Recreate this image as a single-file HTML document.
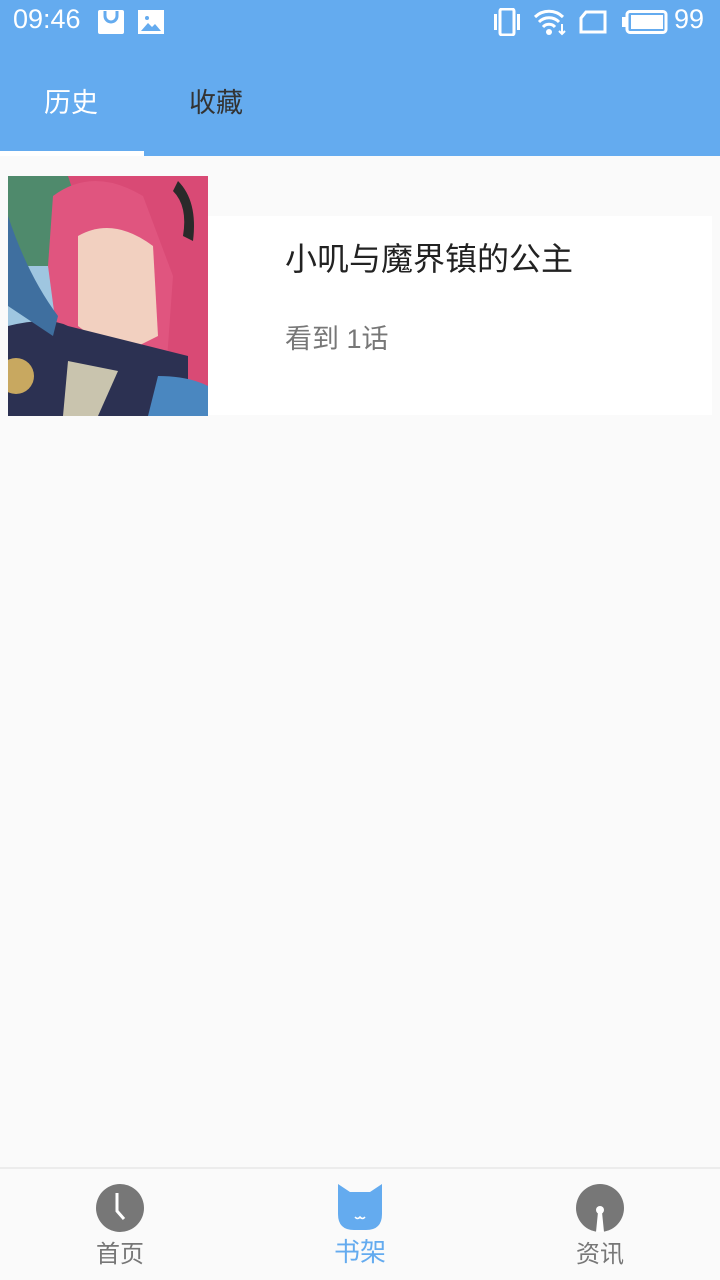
<!DOCTYPE html>
<html><head><meta charset="utf-8"><style>
*{margin:0;padding:0;box-sizing:border-box}
body{width:720px;height:1280px;background:#fafafa;font-family:"Liberation Sans","Noto Sans CJK SC",sans-serif;position:relative;overflow:hidden}
.top{position:absolute;left:0;top:0;width:720px;height:156px;background:#64abef}
.st{position:absolute;top:4px;color:#fff;font-size:27px}
.tab{position:absolute;top:81px;font-size:27px}
.ind{position:absolute;left:0;top:151px;width:144px;height:5px;background:#fff}
.card{position:absolute;left:208px;top:216px;width:504px;height:199px;background:#fff}
.t1{position:absolute;left:285px;top:234px;font-size:32px;color:#222}
.t2{position:absolute;left:285px;top:317px;font-size:27px;color:#777}
.bot{position:absolute;left:0;top:1167px;width:720px;height:113px;background:#fafafa;border-top:2px solid #ececec}
.lbl{position:absolute;top:1234px;font-size:24px;color:#777}
</style></head><body>
<div class="top">
<div class="st" style="left:13px">09:46</div>
<svg style="position:absolute;left:98px;top:10px" width="26" height="24"><rect width="26" height="24" rx="2" fill="#fff"/><path d="M7 1v5a6 6 0 0 0 12 0V1" stroke="#64abef" stroke-width="3" fill="none"/></svg>
<svg style="position:absolute;left:138px;top:10px" width="26" height="24"><rect width="26" height="24" fill="#fff"/><path d="M3 21l7-8 4 4 3-3 6 7z" fill="#64abef"/><circle cx="9" cy="8" r="2" fill="#64abef"/></svg>
<svg style="position:absolute;left:494px;top:8px" width="26" height="28"><rect x="6" y="1" width="14" height="26" rx="2" fill="none" stroke="#fff" stroke-width="3"/><rect x="0" y="6" width="3" height="16" fill="#fff"/><rect x="23" y="6" width="3" height="16" fill="#fff"/></svg>
<svg style="position:absolute;left:533px;top:8px" width="34" height="28"><path d="M2 9a20 20 0 0 1 28 0M6 14a14 14 0 0 1 20 0M10 19a8 8 0 0 1 12 0" stroke="#fff" stroke-width="3" fill="none"/><circle cx="16" cy="24" r="3" fill="#fff"/><path d="M29 16v10m-3-3l3 3 3-3" stroke="#fff" stroke-width="2" fill="none"/></svg>
<svg style="position:absolute;left:578px;top:10px" width="30" height="24"><path d="M8 2h19v20H3V8z" fill="none" stroke="#fff" stroke-width="3"/></svg>
<svg style="position:absolute;left:622px;top:10px" width="46" height="24"><rect x="5" y="1.5" width="39" height="21" rx="3" fill="none" stroke="#fff" stroke-width="3"/><rect x="9" y="5" width="32" height="14" fill="#fff"/><rect x="0" y="7" width="4" height="10" fill="#fff"/></svg>
<div class="st" style="left:674px">99</div>
<div class="tab" style="left:44px;color:#fff">历史</div>
<div class="tab" style="left:189px;color:#333">收藏</div>
<div class="ind"></div>
</div>
<div class="card"></div>
<svg style="position:absolute;left:8px;top:176px" width="200" height="240">
<rect width="200" height="240" fill="#3f6f5c"/>
<rect x="0" y="0" width="70" height="90" fill="#4f8a6c"/>
<rect x="0" y="90" width="60" height="150" fill="#9fc6e0"/>
<path d="M60 0h140v240H140z" fill="#d94a75"/>
<path d="M45 20q40-30 90 0l30 80-10 140H60l-20-150z" fill="#e0557f"/>
<path d="M70 60q35-20 75 10l5 90-40 20-40-30z" fill="#f2d0c0"/>
<path d="M0 150q40-10 60 0l80 20 40 10v60H0z" fill="#2c3152"/>
<path d="M0 40q20 60 50 100l-5 20L0 130z" fill="#3f6f9f"/>
<path d="M150 200q30 0 50 10v30h-60z" fill="#4a87c0"/>
<path d="M60 185l50 10-20 45H55z" fill="#c9c4ae"/>
<path d="M170 5q20 20 15 60l-10-5q5-30-10-45z" fill="#2a2a2a"/>
<circle cx="8" cy="200" r="18" fill="#c8a860"/>
</svg>
<div class="t1">小叽与魔界镇的公主</div>
<div class="t2">看到 1话</div>
<div class="bot"></div>
<svg style="position:absolute;left:96px;top:1184px" width="48" height="48"><ellipse cx="24" cy="24" rx="24" ry="24" fill="#777"/><path d="M21 9v18l7 8" stroke="#fff" stroke-width="3" fill="none"/></svg>
<svg style="position:absolute;left:336px;top:1184px" width="48" height="48"><path d="M2 0l12 8h20l12-8v30q0 16-16 16H18Q2 46 2 30z" fill="#64abef"/><path d="M19 33q2.5 3 5 0q2.5 3 5 0" stroke="#fff" stroke-width="1.5" fill="none"/></svg>
<svg style="position:absolute;left:576px;top:1184px" width="48" height="48"><ellipse cx="24" cy="24" rx="24" ry="24" fill="#777"/><circle cx="24" cy="26" r="4" fill="#fff"/><path d="M22 28l-2 20h8l-2-20z" fill="#fff"/></svg>
<div class="lbl" style="left:96px">首页</div>
<div class="lbl" style="left:334px;color:#64abef;font-size:26px;top:1232px">书架</div>
<div class="lbl" style="left:576px">资讯</div>
</body></html>
